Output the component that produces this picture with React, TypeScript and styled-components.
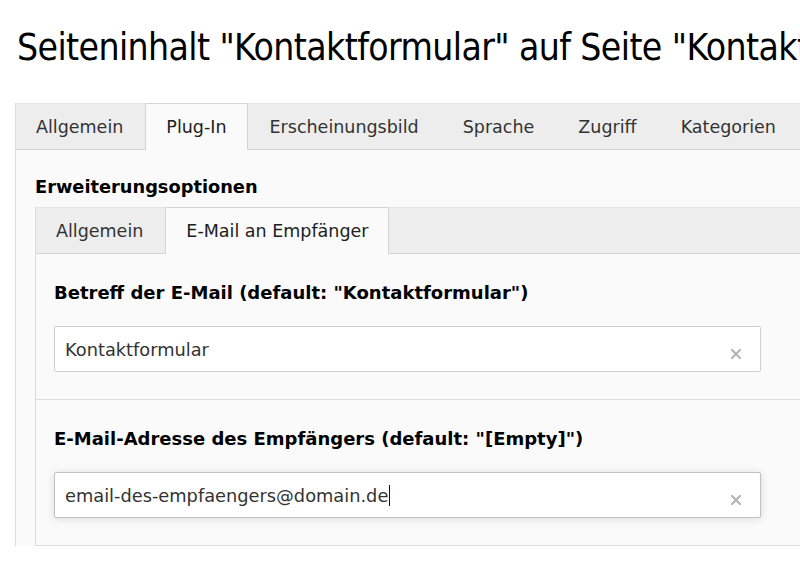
import React from 'react'
import styled, { createGlobalStyle } from 'styled-components'

const GlobalStyle = createGlobalStyle`
    html, body {
        margin : 0;
        padding : 0;
        background : #ffffff;
        overflow : hidden;
    }
    body {
        font-family : "DejaVu Sans", Verdana, sans-serif;
        font-size : 17.5px;
        color : #212121;
    }
`

const Page = styled.div`
    width : 960px;
    padding-top : 26px;
`

const Title = styled.h1`
    margin : 0 0 33px 17px;
    font-family : "DejaVu Sans Condensed", "DejaVu Sans", sans-serif;
    font-weight : 400;
    font-size : 37px;
    line-height : 44px;
    white-space : nowrap;
    color : #000;
    letter-spacing : -0.6px;
`

const TabContainer = styled.div<{ $indent : number }>`
    margin-left : ${p => p.$indent}px;
    border-left : 1px solid #dcdcdc;
`

const TabNav = styled.div`
    display : flex;
    height : 45px;
    background : #ededed;
    border-top : 1px solid #e4e4e4;
    border-bottom : 1px solid #d4d4d4;
`

const Tab = styled.div<{ $active? : boolean }>`
    display : flex;
    align-items : center;
    padding : 0 ${p => p.$active ? 20 : 21}px;
    margin-top : -1px;
    margin-bottom : -1px;
    white-space : nowrap;
    font-size : 17.5px;
    color : ${p => p.$active ? '#212121' : '#333'};
    background : ${p => p.$active ? '#fafafa' : 'transparent'};
    border-left : 1px solid ${p => p.$active ? '#d4d4d4' : 'transparent'};
    border-right : 1px solid ${p => p.$active ? '#d4d4d4' : 'transparent'};
    border-top : 1px solid ${p => p.$active ? '#d4d4d4' : 'transparent'};
    border-radius : 2px 2px 0 0;

    &:first-child {
        padding-left : 19px;
    }
`

const Panel = styled.div`
    background : #fafafa;
    padding : 26px 0 0 19px;
`

const SectionTitle = styled.div`
    font-weight : bold;
    font-size : 17.8px;
    line-height : 22px;
    color : #000;
    margin-bottom : 9px;
`

const InnerPanel = styled.div`
    background : #fafafa;
`

const Field = styled.div`
    padding : 28px 0 27px 18px;
    border-bottom : 1px solid #dcdcdc;
`

const Label = styled.div`
    font-weight : bold;
    font-size : 18px;
    line-height : 21px;
    color : #000;
    margin-bottom : 23px;
`

const Input = styled.div<{ $focused? : boolean }>`
    position : relative;
    display : flex;
    align-items : center;
    box-sizing : border-box;
    width : 707px;
    height : 46px;
    padding : 0 10px;
    background : #fff;
    font-size : 17.8px;
    border : 1px solid ${p => p.$focused ? '#c2c2c2' : '#cfcfcf'};
    border-radius : 2px;
    box-shadow : ${p => p.$focused ? '0 1px 8px rgba(0,0,0,0.13)' : 'none'};
    color : #333;
`

const Caret = styled.span`
    display : inline-block;
    width : 1px;
    height : 21px;
    background : #111;
    margin-left : 1px;
`

const Clear = styled.span`
    position : absolute;
    right : 18px;
    top : 50%;
    transform : translateY(-50%);
    width : 12px;
    height : 12px;
`

const ClearIcon = () => (
    <Clear>
        <svg width="12" height="12" viewBox="0 0 12 12">
            <path d="M2 2 L10 10 M10 2 L2 10" stroke="#b5b5b5" strokeWidth="2.2" strokeLinecap="round" />
        </svg>
    </Clear>
)

const outerTabs = ['Allgemein', 'Plug-In', 'Erscheinungsbild', 'Sprache', 'Zugriff', 'Kategorien']
const innerTabs = ['Allgemein', 'E-Mail an Empfänger']

const App = () => (
    <>
        <GlobalStyle />
        <Page>
            <Title>Seiteninhalt "Kontaktformular" auf Seite "Kontakt"</Title>
            <TabContainer $indent={15}>
                <TabNav>
                    {outerTabs.map(t => <Tab key={t} $active={t === 'Plug-In'}>{t}</Tab>)}
                </TabNav>
                <Panel>
                    <SectionTitle>Erweiterungsoptionen</SectionTitle>
                    <TabContainer $indent={0}>
                        <TabNav>
                            {innerTabs.map(t => <Tab key={t} $active={t !== 'Allgemein'}>{t}</Tab>)}
                        </TabNav>
                        <InnerPanel>
                            <Field>
                                <Label>Betreff der E-Mail (default: "Kontaktformular")</Label>
                                <Input>
                                    Kontaktformular
                                    <ClearIcon />
                                </Input>
                            </Field>
                            <Field>
                                <Label>E-Mail-Adresse des Empfängers (default: "[Empty]")</Label>
                                <Input $focused>
                                    email-des-empfaengers@domain.de<Caret />
                                    <ClearIcon />
                                </Input>
                            </Field>
                        </InnerPanel>
                    </TabContainer>
                </Panel>
            </TabContainer>
        </Page>
    </>
)

export default App
